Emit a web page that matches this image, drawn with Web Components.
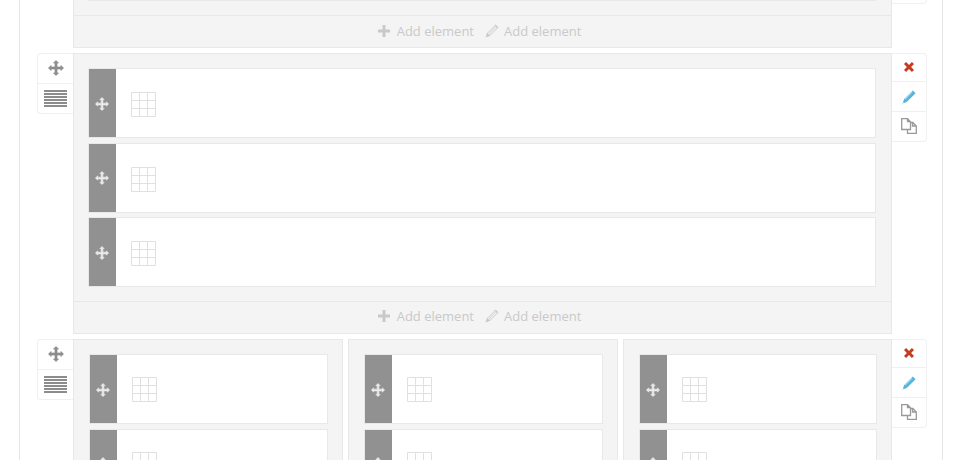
<!DOCTYPE html>
<html>
<head>
<meta charset="utf-8">
<title>Builder</title>
<style>
  html, body { margin: 0; height: 460px; overflow: hidden; background: #fff; font-family: "Open Sans", sans-serif; }
</style>
</head>
<body>
<builder-page>
  <builder-row style="--item-height: 71px; margin-top: -85px">
    <builder-item></builder-item>
  </builder-row>
  <builder-row style="--foot-lift: 4px">
    <builder-item></builder-item>
    <builder-item></builder-item>
    <builder-item></builder-item>
  </builder-row>
  <builder-row columns style="--cell-top: 22px">
    <builder-column>
      <builder-item></builder-item>
      <builder-item></builder-item>
    </builder-column>
    <builder-column>
      <builder-item></builder-item>
      <builder-item></builder-item>
    </builder-column>
    <builder-column>
      <builder-item></builder-item>
      <builder-item></builder-item>
    </builder-column>
  </builder-row>
</builder-page>

<script>
const moveIcon = '<path fill="currentColor" stroke="currentColor" stroke-width=".7" stroke-linejoin="round" d="M8 .5l2.500 2.500H9v4h4V5.500L15.500 8 13 10.500V9H9v4h1.500L8 15.500 5.500 13H7V9H3v1.500L.5 8 3 5.500V7h4V3H5.500z"/>';

const icons = {
  move: {box: '0 0 16 16', svg: moveIcon},
  list: {box: '0 0 23 17', svg: '<path fill="currentColor" d="M0 0h23v2H0zM0 3h23v2H0zM0 6h23v2H0zM0 9h23v2H0zM0 12h23v2H0zM0 15h23v2H0z"/>'},
  close: {box: '0 0 10 10', svg: '<path fill="currentColor" d="M2.100 0L5 2.900 7.900 0 10 2.100 7.100 5 10 7.900 7.900 10 5 7.100 2.100 10 0 7.900 2.900 5 0 2.100z"/>'},
  pencil: {box: '0 0 14 14', svg: '<path fill="#56b5de" d="M10.800.4l2.800 2.800L5 11.800 1.800 13.200l-.4-.4-.7 1.100-.3-.3 1-1.100-.3-.4L2.200 9z"/><path fill="#b5dff1" d="M2.800 8.800L9.900 1.700l.6.6-7.100 7.100z"/>'},
  copy: {box: '0 0 16 16', svg: '<path fill="none" stroke="#999" stroke-width="1.300" d="M.7.7h5.800l3 3v7.800H.7zM6.500.7v3h3M6.500 11.500v3.800h8.800V8l-3.500-3.500H9.500M11.500 4.500V8h3.800"/>'},
  plus: {box: '0 0 12 12', svg: '<path fill="currentColor" d="M4.500 0h3v4.500H12v3H7.500V12h-3V7.500H0v-3h4.500z"/>'},
  edit: {box: '0 0 14 14', svg: '<path fill="currentColor" d="M10.600.5l2.900 2.900-8.700 8.700L.5 13.500l1.400-4.300zM2.700 9.300l2 2 7.300-7.300-2-2z"/><path fill="currentColor" opacity=".55" d="M3.500 9.300l6.600-6.600.9.9-6.600 6.600z"/>'},
  grid: {box: '0 0 25 25', svg: '<path fill="none" stroke="currentColor" d="M.5.5h24v24H.5zM8.500.5v24M16.500.5v24M.5 8.500h24M.5 16.500h24"/>'}
};

class UiIcon extends HTMLElement {
  connectedCallback() {
    const icon = icons[this.getAttribute('name')];
    const [, , boxW, boxH] = icon.box.split(' ');
    const [w, h] = (this.getAttribute('size') || `${boxW} ${boxH}`).split(' ');
    this.attachShadow({mode: 'open'}).innerHTML = `
      <style>
        :host { display: block; flex: none; width: ${w}px; height: ${h}px; line-height: 0; }
        svg { display: block; }
      </style>
      <svg width="${w}" height="${h}" viewBox="${icon.box}">${icon.svg}</svg>
    `;
  }
}

class BuilderPage extends HTMLElement {
  constructor() {
    super();
    this.attachShadow({mode: 'open'}).innerHTML = `
      <style>
        :host {
          display: block;
          width: 922px;
          height: 900px;
          margin-left: 19px;
          border-left: 1px solid #e5e5e5;
          border-right: 1px solid #e5e5e5;
        }
      </style>
      <slot></slot>
    `;
  }
}

class ToolStack extends HTMLElement {
  constructor() {
    super();
    this.attachShadow({mode: 'open'}).innerHTML = `
      <style>
        :host {
          display: flex;
          flex-direction: column;
          align-self: flex-start;
          background: #fff;
          border: 1px solid #f0f0f0;
          box-sizing: border-box;
        }
        :host([side="left"]) { width: 36px; border-right: 0; border-radius: 4px 0 0 4px; }
        :host([side="right"]) { width: 35px; border-left: 0; border-radius: 0 4px 4px 0; }
      </style>
      <slot></slot>
    `;
  }
}

class ToolButton extends HTMLElement {
  constructor() {
    super();
    this.attachShadow({mode: 'open'}).innerHTML = `
      <style>
        :host {
          display: flex;
          align-items: center;
          justify-content: center;
          box-sizing: border-box;
          height: var(--h, 30px);
          padding-bottom: var(--lift, 0);
          border-top: 1px solid #f0f0f0;
          color: #8c8c8c;
        }
        :host(:first-child) { border-top: 0; }
      </style>
      <slot></slot>
    `;
  }
}

class BuilderRow extends HTMLElement {
  constructor() {
    super();
    this.attachShadow({mode: 'open'}).innerHTML = `
      <style>
        :host {
          display: flex;
          margin: 0 0 5px 17px;
          width: 890px;
          color: #c9c9c9;
        }
        .block { flex: 0 0 819px; box-sizing: border-box; }
        .body {
          background: #f4f4f4;
          border: 1px solid #e8e8e8;
          border-bottom: 0;
          padding: 14px 15px 14px 14px;
        }
        :host([columns]) .body {
          display: grid;
          grid-template-columns: 270px 270px 1fr;
          gap: 5px;
          padding: 0;
          border: 0;
          background: none;
        }
        .foot {
          display: flex;
          align-items: center;
          justify-content: center;
          gap: 11px;
          height: 33px;
          padding: 0 6px var(--foot-lift, 2px) 0;
          background: #f4f4f4;
          border: 1px solid #e8e8e8;
          box-sizing: border-box;
          font-size: 13px;
        }
        .add { display: flex; align-items: center; gap: 7px; }
        .add + .add { gap: 5px; }
        :host([columns]) .foot { display: none; }
      </style>
      <tool-stack side="left">
        <tool-button style="--h: 29px; --lift: 1px"><ui-icon name="move"></ui-icon></tool-button>
        <tool-button style="--h: 30px"><ui-icon name="list"></ui-icon></tool-button>
      </tool-stack>
      <div class="block">
        <div class="body"><slot></slot></div>
        <div class="foot">
          <span class="add"><ui-icon name="plus"></ui-icon>Add element</span>
          <span class="add"><ui-icon name="edit"></ui-icon>Add element</span>
        </div>
      </div>
      <tool-stack side="right">
        <tool-button style="--h: 27px; --lift: 1px; color: #c63a1e"><ui-icon name="close"></ui-icon></tool-button>
        <tool-button style="--h: 30px"><ui-icon name="pencil"></ui-icon></tool-button>
        <tool-button style="--h: 30px; --lift: 1px"><ui-icon name="copy"></ui-icon></tool-button>
      </tool-stack>
    `;
  }
}

class BuilderColumn extends HTMLElement {
  constructor() {
    super();
    this.attachShadow({mode: 'open'}).innerHTML = `
      <style>
        :host {
          display: block;
          min-width: 0;
          background: #f4f4f4;
          border: 1px solid #e8e8e8;
          padding: 14px 14px 14px 15px;
        }
      </style>
      <slot></slot>
    `;
  }
}

class BuilderItem extends HTMLElement {
  constructor() {
    super();
    this.attachShadow({mode: 'open'}).innerHTML = `
      <style>
        :host {
          display: flex;
          box-sizing: border-box;
          height: var(--item-height, 70px);
          margin-bottom: 4.5px;
          background: #fff;
          border: 1px solid #e8e8e8;
        }
        :host(:last-child) { margin-bottom: 0; }
        .handle {
          flex: 0 0 27px;
          display: flex;
          align-items: center;
          justify-content: center;
          background: #919191;
          color: #ececec;
          padding: 1px 1px 0 0;
          box-sizing: border-box;
        }
        .cell { padding: var(--cell-top, 23px) 0 0 15px; color: #e0e0e0; }
      </style>
      <div class="handle"><ui-icon name="move" size="14 14"></ui-icon></div>
      <div class="cell"><ui-icon name="grid"></ui-icon></div>
    `;
  }
}

customElements.define('ui-icon', UiIcon);
customElements.define('builder-page', BuilderPage);
customElements.define('tool-stack', ToolStack);
customElements.define('tool-button', ToolButton);
customElements.define('builder-row', BuilderRow);
customElements.define('builder-column', BuilderColumn);
customElements.define('builder-item', BuilderItem);
</script>
</body>
</html>
